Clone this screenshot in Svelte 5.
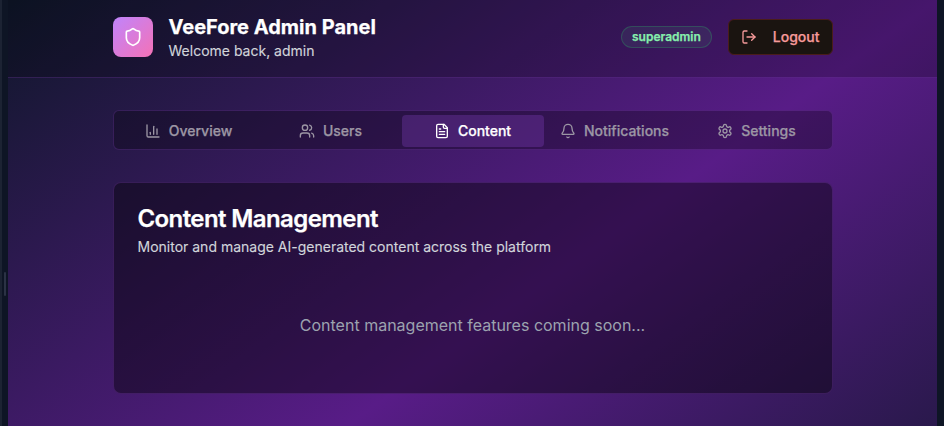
<script>
  const tabs = [
    { label: 'Overview', icon: ['M3 3v16a2 2 0 0 0 2 2h16', 'M18 17V9', 'M13 17V5', 'M8 17v-3'] },
    { label: 'Users', icon: ['M16 21v-2a4 4 0 0 0-4-4H6a4 4 0 0 0-4 4v2', 'M5 7a4 4 0 1 0 8 0a4 4 0 1 0-8 0', 'M22 21v-2a4 4 0 0 0-3-3.87', 'M16 3.13a4 4 0 0 1 0 7.75'] },
    { label: 'Content', icon: ['M15 2H6a2 2 0 0 0-2 2v16a2 2 0 0 0 2 2h12a2 2 0 0 0 2-2V7Z', 'M14 2v4a2 2 0 0 0 2 2h4', 'M10 9H8', 'M16 13H8', 'M16 17H8'] },
    { label: 'Notifications', icon: ['M10.268 21a2 2 0 0 0 3.464 0', 'M3.262 15.326A1 1 0 0 0 4 17h16a1 1 0 0 0 .74-1.673C19.41 13.956 18 12.499 18 8A6 6 0 0 0 6 8c0 4.499-1.411 5.956-2.738 7.326'] },
    { label: 'Settings', icon: ['M12.22 2h-.44a2 2 0 0 0-2 2v.18a2 2 0 0 1-1 1.73l-.43.25a2 2 0 0 1-2 0l-.15-.08a2 2 0 0 0-2.73.73l-.22.38a2 2 0 0 0 .73 2.73l.15.1a2 2 0 0 1 1 1.72v.51a2 2 0 0 1-1 1.74l-.15.09a2 2 0 0 0-.73 2.73l.22.38a2 2 0 0 0 2.73.73l.15-.08a2 2 0 0 1 2 0l.43.25a2 2 0 0 1 1 1.73V20a2 2 0 0 0 2 2h.44a2 2 0 0 0 2-2v-.18a2 2 0 0 1 1-1.73l.43-.25a2 2 0 0 1 2 0l.15.08a2 2 0 0 0 2.73-.73l.22-.39a2 2 0 0 0-.73-2.73l-.15-.08a2 2 0 0 1-1-1.74v-.5a2 2 0 0 1 1-1.74l.15-.09a2 2 0 0 0 .73-2.73l-.22-.38a2 2 0 0 0-2.73-.73l-.15.08a2 2 0 0 1-2 0l-.43-.25a2 2 0 0 1-1-1.73V4a2 2 0 0 0-2-2z', 'M9 12a3 3 0 1 0 6 0a3 3 0 1 0-6 0'] }
  ];
  const shield = ['M20 13c0 5-3.5 7.5-7.66 8.95a1 1 0 0 1-.67-.01C7.5 20.5 4 18 4 13V6a1 1 0 0 1 1-1c2 0 4.5-1.2 6.24-2.72a1.17 1.17 0 0 1 1.52 0C14.51 3.81 17 5 19 5a1 1 0 0 1 1 1z'];
  const exit = ['M9 21H5a2 2 0 0 1-2-2V5a2 2 0 0 1 2-2h4', 'M16 17l5-5-5-5', 'M21 12H9'];
  let active = $state('Content');
</script>

{#snippet icon(paths, size)}
  <svg width={size} height={size} viewBox="0 0 24 24" fill="none" stroke="currentColor" stroke-width="2" stroke-linecap="round" stroke-linejoin="round">
    {#each paths as d}<path {d} />{/each}
  </svg>
{/snippet}

<div class="frame">
  <div class="rail"></div>
  <div class="gutter"><span class="grip"></span></div>
  <div class="panel">
    <header>
      <div class="wrap bar">
        <div class="brand">
          <div class="logo">{@render icon(shield, 20)}</div>
          <div>
            <h1>VeeFore Admin Panel</h1>
            <p>Welcome back, admin</p>
          </div>
        </div>
        <div class="account">
          <span class="badge">superadmin</span>
          <button class="logout">{@render icon(exit, 16)}Logout</button>
        </div>
      </div>
    </header>
    <main class="wrap">
      <nav>
        {#each tabs as tab}
          <button class="tab" class:active={active === tab.label} onclick={() => (active = tab.label)}>
            {@render icon(tab.icon, 16)}{tab.label}
          </button>
        {/each}
      </nav>
      <section>
        <h2>Content Management</h2>
        <p class="desc">Monitor and manage AI-generated content across the platform</p>
        <p class="empty">Content management features coming soon...</p>
      </section>
    </main>
  </div>
</div>

<style>
  .frame, .frame * { box-sizing: border-box; }
  .frame {
    display: flex;
    width: 944px;
    height: 426px;
    overflow: hidden;
    background: #0e1525;
    font-family: Inter, "Liberation Sans", sans-serif;
    font-size: 16px;
    line-height: 24px;
    color: #fff;
  }
  h1, h2, p { margin: 0; }
  h1, h2, .badge, .logout, .tab { -webkit-text-stroke: 0.25px currentColor; }
  .brand p, .desc { -webkit-text-stroke: 0.12px currentColor; }
  svg { display: block; flex: none; }
  button { font: inherit; margin: 0; cursor: pointer; }
  .rail { width: 2px; background: #1c2333; }
  .gutter { width: 6px; display: flex; align-items: center; padding: 142px 0 0 2px; }
  .grip { width: 2px; height: 24px; background: #2b3245; border-radius: 1px; }
  .panel {
    width: 929px;
    background: linear-gradient(to bottom right, #0f172a, #581c87, #0f172a) 0 0 / 929px 670px no-repeat;
  }
  header {
    height: 78px;
    padding: 13px 0 16px;
    background: rgba(0, 0, 0, 0.2);
    border-bottom: 1px solid rgba(168, 85, 247, 0.2);
  }
  .wrap { width: 720px; margin: 0 auto; }
  .bar, .brand, .account { display: flex; align-items: center; }
  .bar { justify-content: space-between; height: 48px; }
  .brand, .account { gap: 16px; }
  .logo {
    display: grid;
    place-items: center;
    width: 40px;
    height: 40px;
    border-radius: 8px;
    background: linear-gradient(to bottom right, #c084fc, #f472b6);
  }
  h1 { font-size: 20px; line-height: 28px; font-weight: 700; }
  .brand p { font-size: 14px; line-height: 20px; color: #d1d5db; }
  .badge {
    padding: 2px 10px;
    border: 1px solid rgba(34, 197, 94, 0.25);
    border-radius: 999px;
    background: rgba(74, 120, 110, 0.17);
    color: #86efac;
    font-size: 12px;
    line-height: 16px;
    font-weight: 600;
  }
  .logout {
    display: flex;
    align-items: center;
    gap: 16px;
    height: 36px;
    padding: 0 12px;
    border: 1px solid #4a1d1a;
    border-radius: 6px;
    background: #1a1410;
    color: #f69a9a;
    font-size: 14px;
    font-weight: 500;
  }
  main { padding-top: 32px; }
  nav {
    display: grid;
    grid-template-columns: repeat(5, 1fr);
    height: 40px;
    padding: 4px;
    border: 1px solid rgba(168, 85, 247, 0.2);
    border-radius: 6px;
    background: rgba(0, 0, 0, 0.28);
  }
  .tab {
    display: flex;
    align-items: center;
    justify-content: center;
    gap: 8px;
    height: 32px;
    padding: 6px 12px;
    border: 0;
    border-radius: 4px;
    background: none;
    color: #9c96a4;
    font-size: 14px;
    line-height: 20px;
    font-weight: 500;
  }
  .tab.active { background: rgba(168, 85, 247, 0.22); color: #fff; }
  section {
    margin-top: 32px;
    height: 212px;
    padding: 24px;
    border: 1px solid rgba(168, 85, 247, 0.2);
    border-radius: 8px;
    background: rgba(0, 0, 0, 0.4);
  }
  h2 { font-size: 24px; line-height: 24px; font-weight: 600; letter-spacing: -0.025em; }
  .desc { margin-top: 6px; font-size: 14px; line-height: 20px; color: #d1d5db; }
  .empty { padding: 56px 0 32px; text-align: center; color: #9ca3af; }
</style>
